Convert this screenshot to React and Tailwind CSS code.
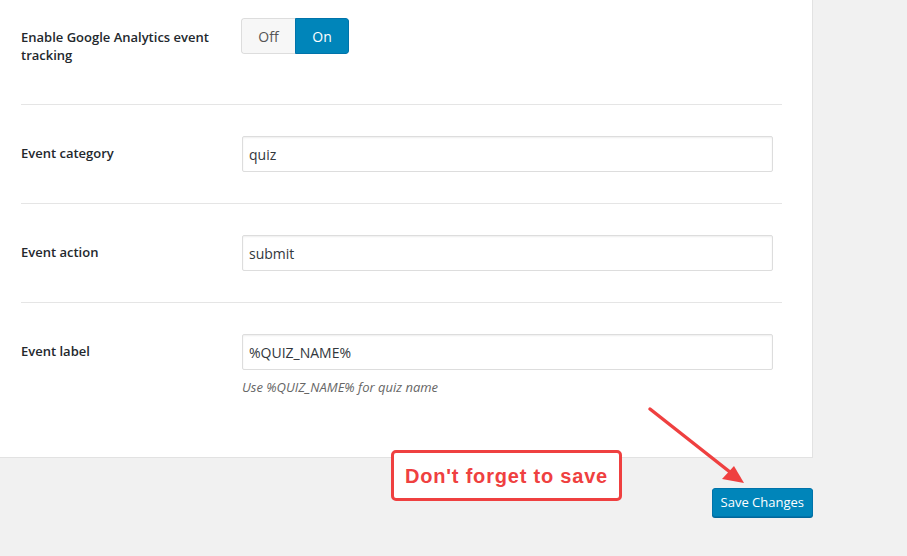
import React from 'react';

const font = { fontFamily: '"Open Sans", "Noto Sans", sans-serif' };

const Field = ({ label, value, help, last }) => (
  <div className={`${last ? '' : 'border-b border-[#e5e5e5]'} pt-[31px] ${help ? 'pb-[61px]' : 'pb-[31px]'}`}>
    <div className="flex items-center">
      <div className="w-[221px] text-[13px] font-semibold text-[#23282d]">{label}</div>
      <div className="w-[531px] h-[36px] border border-[#dddddd] rounded-[2px] bg-white shadow-[inset_0_1px_2px_rgba(0,0,0,0.07)] flex items-center pl-[6px] text-[14px] text-[#32373c]">
        {value}
      </div>
    </div>
    {help && (
      <div className="ml-[221px] mt-[8px] text-[13px] leading-[18px] italic text-[#666666]">{help}</div>
    )}
  </div>
);

export default function App() {
  return (
    <div className="relative min-h-[556px] w-[907px] bg-[#f1f1f1] overflow-hidden" style={font}>
      <div className="w-[813px] bg-white border-r border-b border-[#e2e2e2] px-[21px]">
        <div className="w-[761px]">
          <div className="flex items-start pt-[18px] h-[105px] border-b border-[#e5e5e5]">
            <div className="w-[220px] pt-[10px] pr-[20px] text-[13px] leading-[18px] font-semibold text-[#23282d]">
              Enable Google Analytics event tracking
            </div>
            <div className="flex h-[36px] rounded-[3px] overflow-hidden text-[14px]">
              <div className="w-[54px] flex items-center justify-center bg-[#f7f7f7] border border-r-0 border-[#dddddd] rounded-l-[3px] text-[#555555]">Off</div>
              <div className="w-[54px] flex items-center justify-center bg-[#0085ba] border border-[#0073aa] rounded-r-[3px] text-white">On</div>
            </div>
          </div>
          <Field label="Event category" value="quiz" />
          <Field label="Event action" value="submit" />
          <Field label="Event label" value="%QUIZ_NAME%" help="Use %QUIZ_NAME% for quiz name" last />
        </div>
      </div>

      <div className="w-[813px] flex justify-end pt-[30px]">
        <button className="h-[29px] px-[8px] bg-[#0085ba] border border-[#0073aa] rounded-[3px] text-white text-[13px] shadow-[0_1px_0_#006799]">
          Save Changes
        </button>
      </div>

      <div
        className="absolute left-[391px] top-[450px] w-[231px] h-[51px] bg-white border-[3px] border-[#ef4040] rounded-[5px] flex items-center justify-center text-[#ef4040] text-[20px] font-black tracking-[0.8px]"
        style={{ fontFamily: '"Liberation Sans", Arial, sans-serif' }}
      >
        Don't forget to save
      </div>

      <svg className="absolute left-0 top-0 pointer-events-none" width="907" height="556">
        <line x1="650" y1="409" x2="735" y2="476" stroke="#ef4040" strokeWidth="3.5" strokeLinecap="round" />
        <polygon points="744,483 722,479 734,466" fill="#ef4040" />
      </svg>
    </div>
  );
}
